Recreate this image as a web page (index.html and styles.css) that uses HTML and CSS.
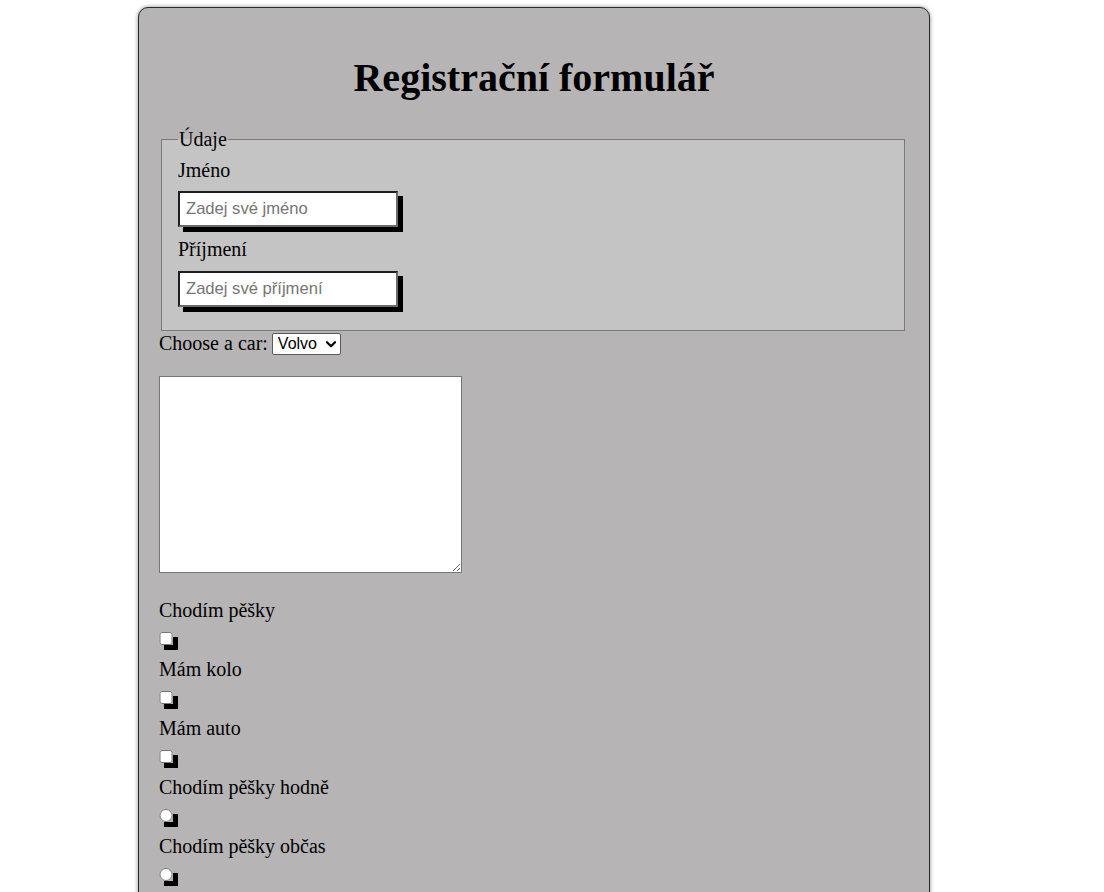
FILE: index.html
```html
<!DOCTYPE html>
<html lang="cs">
<head>
<meta charset="utf-8">
<title>Registrační formulář</title>
<link rel="stylesheet" href="styles.css">
</head>
<body>
<form class="card">
  <h1 class="title">Registrační formulář</h1>
  <fieldset class="group">
    <legend class="legend">Údaje</legend>
    <label class="field-label" for="jmeno">Jméno</label>
    <input class="text-input" id="jmeno" type="text" placeholder="Zadej své jméno">
    <label class="field-label" for="prijmeni">Příjmení</label>
    <input class="text-input" id="prijmeni" type="text" placeholder="Zadej své příjmení">
  </fieldset>
  <div class="car-row">
    <label for="cars">Choose a car:</label>
    <span class="select-wrap">
      <select class="car-select" id="cars" name="cars">
        <option>Volvo</option>
        <option>Saab</option>
        <option>Fiat</option>
        <option>Audi</option>
      </select>
      <svg class="chevron" width="10" height="7" viewBox="0 0 10 7" aria-hidden="true">
        <polyline points="1,1.2 5,5.2 9,1.2" fill="none" stroke="#000" stroke-width="2.2" stroke-linecap="round" stroke-linejoin="round"/>
      </svg>
    </span>
  </div>
  <textarea class="note"></textarea>
  <div class="choices">
    <label class="choice-label" for="c1">Chodím pěšky</label>
    <input class="choice" id="c1" type="checkbox">
    <label class="choice-label" for="c2">Mám kolo</label>
    <input class="choice" id="c2" type="checkbox">
    <label class="choice-label" for="c3">Mám auto</label>
    <input class="choice" id="c3" type="checkbox">
    <label class="choice-label" for="r1">Chodím pěšky hodně</label>
    <input class="choice" id="r1" type="radio" name="chuze">
    <label class="choice-label" for="r2">Chodím pěšky občas</label>
    <input class="choice" id="r2" type="radio" name="chuze">
  </div>
</form>
</body>
</html>
```

FILE: styles.css
```css
html, body {
  margin: 0;
  padding: 0;
  background: #ffffff;
}

body {
  font-family: "Liberation Serif", "Times New Roman", serif;
  font-size: 20px;
  line-height: 23px;
  color: #000;
}

.card {
  width: 750px;
  margin: 7px 0 0 138px;
  padding: 0 20px 40px;
  background: #b6b4b5;
  border: 1px solid #2a2a2a;
  border-radius: 10px;
  box-shadow: 0 0 4px rgba(0, 0, 0, 0.45);
}

.title {
  margin: 47px 0 0;
  font-size: 40px;
  line-height: 46px;
  font-weight: bold;
  text-align: center;
}

.group {
  margin: 26.5px 4px 0 2px;
  padding: 8px 16px 12px;
  background: #c4c4c4;
  border: 1px solid #7a7a7a;
}

.legend {
  padding: 0 1px;
  line-height: 23px;
}

.field-label {
  display: block;
}

.text-input {
  display: block;
  box-sizing: border-box;
  width: 220px;
  height: 36px;
  margin: 9.5px 0 11px;
  padding: 0 6px;
  font-family: "Liberation Sans", Arial, sans-serif;
  font-size: 16.6px;
  background: #fff;
  border: 2px solid;
  border-color: #1e1e1e #6b6b6b #6b6b6b #1e1e1e;
  box-shadow: 5px 5px 0 #000;
  outline: none;
}

.text-input::placeholder {
  color: #757575;
}

.car-row {
  display: flex;
  align-items: center;
  gap: 4px;
  margin-top: 1.5px;
}

.select-wrap {
  position: relative;
  display: block;
  height: 22px;
}

.car-select {
  appearance: none;
  -webkit-appearance: none;
  display: block;
  box-sizing: border-box;
  width: 69px;
  height: 22px;
  margin: 0;
  padding: 0 18px 0 5px;
  font-family: "Liberation Sans", Arial, sans-serif;
  font-size: 16px;
  line-height: 20px;
  background: #fff;
  color: #000;
  border: 1px solid #5a5a5a;
  border-radius: 2px;
}

.chevron {
  position: absolute;
  right: 5px;
  top: 8px;
  pointer-events: none;
}

.note {
  display: block;
  box-sizing: border-box;
  width: 303px;
  height: 197px;
  margin-top: 21px;
  padding: 2px;
  background: #fff;
  border: 1px solid #767676;
}

.choices {
  margin-top: 24.5px;
}

.choice-label {
  display: block;
  position: relative;
  top: 1px;
}

.choice {
  display: block;
  width: 14px;
  height: 13px;
  margin: 11.5px 0 11.5px 0;
  box-shadow: 5px 5px 0 #000;
}
```
